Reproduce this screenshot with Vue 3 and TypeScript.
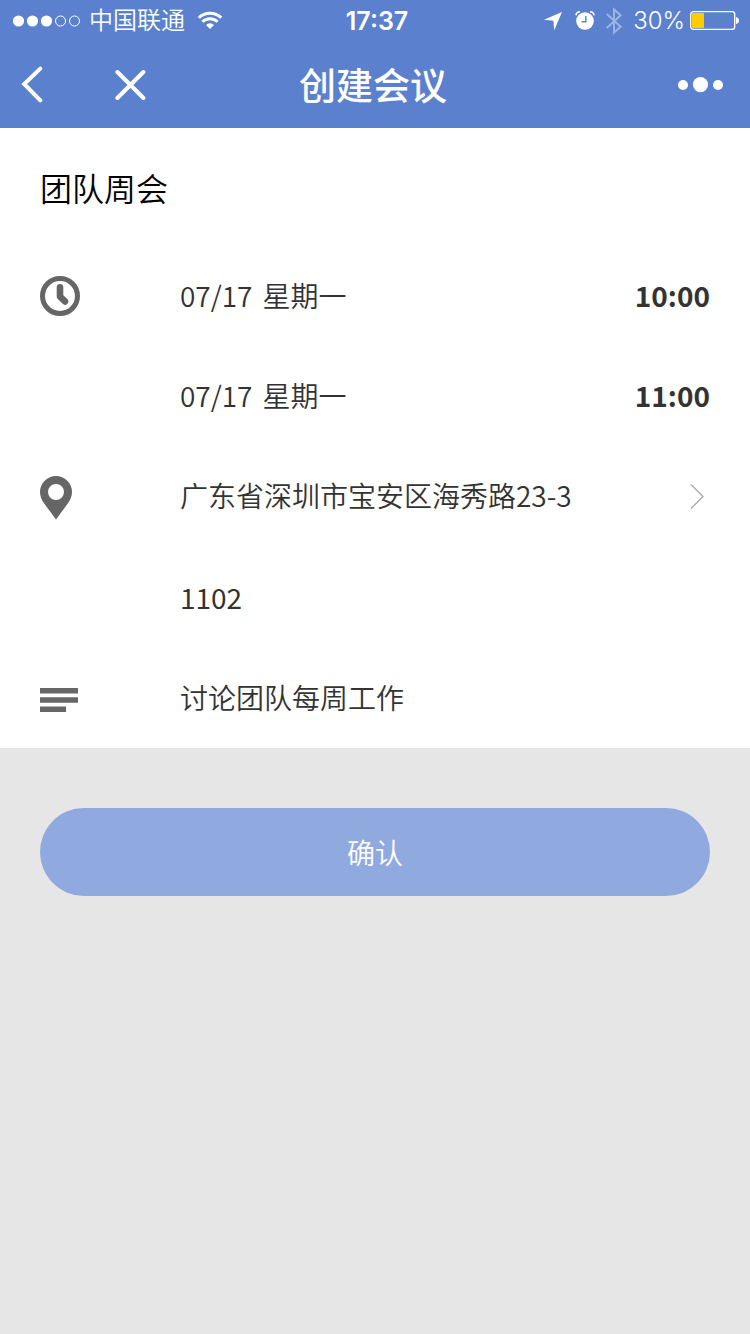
<script setup lang="ts">
import { ref } from 'vue'

interface Slot {
  label: string
  date: string
  weekday: string
  time: string
}

const title = ref('团队周会')
const room = ref('1102')
const note = ref('讨论团队每周工作')
const address = ref('广东省深圳市宝安区海秀路23-3')
const slots = ref<Slot[]>([
  { label: '开始', date: '07/17', weekday: '星期一', time: '10:00' },
  { label: '结束', date: '07/17', weekday: '星期一', time: '11:00' },
])
const signal = 3
const battery = 30
</script>

<template>
  <div class="page">
    <header class="top">
      <div class="status">
        <div class="side">
          <svg class="signal" width="70" height="12" viewBox="0 0 70 12" aria-hidden="true">
            <circle
              v-for="n in 5"
              :key="n"
              :cx="n * 14 - 7.5"
              cy="6"
              :r="n <= signal ? 5.6 : 5"
              :fill="n <= signal ? '#fff' : 'none'"
              :stroke="n <= signal ? 'none' : '#fff'"
            />
          </svg>
          <span class="carrier">中国联通</span>
          <svg class="wifi" width="26" height="20" viewBox="0 0 26 20" fill="none" stroke="#fff" stroke-width="3" aria-hidden="true">
            <path d="M1.8 6.8a16 16 0 0 1 22.4 0" />
            <path d="M5.4 10.8a10.8 10.8 0 0 1 15.2 0" />
            <path d="M13 18l-4-4.1a5.6 5.6 0 0 1 8 0z" fill="#fff" stroke="none" />
          </svg>
        </div>
        <span class="clock">17:37</span>
        <div class="side right">
          <svg width="20" height="20" viewBox="0 0 20 20" fill="#fff" aria-hidden="true">
            <path d="M19 1L11.2 19.2L10.4 9.8L1 8.8z" />
          </svg>
          <svg class="alarm" width="20" height="20" viewBox="0 0 20 20" aria-hidden="true">
            <circle cx="10" cy="10" r="8.8" fill="#fff" />
            <path d="M1 4.4Q1.2 1 5 .8M19 4.4Q18.8 1 15 .8" fill="none" stroke="#fff" stroke-width="1.6" />
            <path d="M10.8 5v5.8H6.6" fill="none" stroke="#5b81ce" stroke-width="1.4" />
          </svg>
          <svg class="bluetooth" width="18" height="28" viewBox="0 0 18 28" fill="none" stroke="#9db3e2" stroke-width="2" aria-hidden="true">
            <path d="M1.8 7L15.6 19.8L9 25.6V2.4L15.6 8.2L1.8 21" />
          </svg>
          <span class="percent">{{ battery }}%</span>
          <svg width="50" height="20" viewBox="0 0 50 20" aria-hidden="true">
            <rect x="0.7" y="0.7" width="44" height="17.6" rx="2.6" fill="none" stroke="#fff" stroke-width="1.3" />
            <rect x="2" y="2.1" :width="battery * 0.4" height="14.8" rx="1" fill="#fc0" />
            <path d="M46 6q3 .6 3 3.4t-3 3.6z" fill="#fff" />
          </svg>
        </div>
      </div>
      <nav class="bar">
        <div class="actions">
          <button type="button" aria-label="返回">
            <svg width="24" height="38" viewBox="0 0 24 38" fill="none" stroke="#fff" stroke-width="4" stroke-linecap="round" stroke-linejoin="miter">
              <path d="M20.3 2.6L4.2 18L20.3 34.4" />
            </svg>
          </button>
          <button type="button" aria-label="关闭">
            <svg width="32" height="32" viewBox="0 0 32 32" fill="none" stroke="#fff" stroke-width="4" stroke-linecap="round">
              <path d="M3.4 3L29.4 29M29.4 3L3.4 29" />
            </svg>
          </button>
        </div>
        <h1>创建会议</h1>
        <div class="actions end">
          <button type="button" aria-label="更多">
            <svg width="48" height="16" viewBox="0 0 48 16" fill="#fff">
              <circle cx="5" cy="8" r="5" />
              <circle cx="22.5" cy="7.6" r="7.6" />
              <circle cx="40" cy="8" r="5" />
            </svg>
          </button>
        </div>
      </nav>
    </header>

    <form @submit.prevent>
      <div class="sheet">
        <div class="heading">
          <input v-model="title" type="text" aria-label="会议名称" />
        </div>

        <section class="group">
          <div class="mark">
            <svg width="40" height="40" viewBox="0 0 40 40" fill="none" stroke="#666" aria-hidden="true">
              <circle cx="20" cy="20" r="17.5" stroke-width="5" />
              <path d="M20 11.4V20.6L25 25.4" stroke-width="6.6" stroke-linecap="round" stroke-linejoin="round" />
            </svg>
          </div>
          <div class="fields">
            <div v-for="slot in slots" :key="slot.label" class="row">
              <button type="button" class="date" :aria-label="`${slot.label}日期 ${slot.date} ${slot.weekday}`">
                <span>{{ slot.date }}</span>
                <span>{{ slot.weekday }}</span>
              </button>
              <button type="button" class="time" :aria-label="`${slot.label}时间 ${slot.time}`">{{ slot.time }}</button>
            </div>
          </div>
        </section>

        <section class="group">
          <div class="mark">
            <svg width="32" height="48" viewBox="0 -4 32 48" aria-hidden="true">
              <path d="M16 0A16 16 0 0 0 0 16Q0 22 4.6 28L16 43.6L27.4 28Q32 22 32 16A16 16 0 0 0 16 0zM16 8a8 8 0 1 1 0 16a8 8 0 0 1 0-16z" fill="#666" fill-rule="evenodd" />
            </svg>
          </div>
          <div class="fields places">
            <button type="button" class="row link">
              <span>{{ address }}</span>
              <svg width="20" height="28" viewBox="0 0 20 28" fill="none" stroke="#aaa" stroke-width="1.4" aria-hidden="true">
                <path d="M1 3.4L13 15.4L1 27.4" />
              </svg>
            </button>
            <div class="row">
              <input v-model="room" class="room" type="text" aria-label="房间号" />
            </div>
          </div>
        </section>

        <section class="group">
          <div class="mark">
            <svg width="38" height="28" viewBox="0 -4 38 28" fill="#666" aria-hidden="true">
              <path d="M0 0h38v5.6H0zM0 9.2h38v5.6H0zM0 18.4h26V24H0z" />
            </svg>
          </div>
          <div class="fields">
            <div class="row">
              <input v-model="note" type="text" aria-label="会议备注" />
            </div>
          </div>
        </section>
      </div>

      <div class="footer">
        <button type="submit" class="confirm">确认</button>
      </div>
    </form>
  </div>
</template>

<style>
body {
  margin: 0;
  background: #e6e6e6;
}
</style>

<style scoped>
.page {
  min-height: 100vh;
  background: #e6e6e6;
  color: #333;
  font-family: "Noto Sans CJK SC", sans-serif;
  font-size: 28px;
  line-height: 40px;
}
* {
  box-sizing: border-box;
}
svg {
  display: block;
  flex: none;
}
button,
input {
  margin: 0;
  padding: 0;
  border: 0;
  border-radius: 0;
  background: none;
  color: inherit;
  font: inherit;
  text-align: left;
  outline: none;
}
button {
  cursor: pointer;
}
input {
  width: 100%;
  min-width: 0;
}
.top {
  background: #5b81ce;
  color: #fff;
}
.status {
  display: flex;
  align-items: center;
  height: 42px;
  padding: 0 10px 0 12px;
  font-family: Inter, "Noto Sans CJK SC", sans-serif;
  font-size: 24px;
}
.side {
  display: flex;
  flex: 1;
  align-items: center;
}
.side.right {
  justify-content: flex-end;
}
.carrier {
  margin: 0 12px 0 7px;
  font-weight: 350;
}
.clock {
  padding-left: 2px;
  font-size: 25px;
  font-weight: 600;
}
.alarm {
  margin-left: 12px;
}
.bluetooth {
  margin: 0 10px 0 10px;
}
.percent {
  margin-right: 5px;
  font-weight: 350;
}
.bar {
  display: flex;
  align-items: center;
  height: 86px;
  padding: 0 24px 0 20px;
}
.actions {
  display: flex;
  flex: 1;
  align-items: center;
  gap: 70px;
}
.actions.end {
  justify-content: flex-end;
}
h1 {
  margin: 0;
  padding-bottom: 2px;
  font-size: 37px;
  font-weight: 500;
}
.sheet {
  background: #fff;
}
.heading {
  display: flex;
  align-items: center;
  height: 118px;
  padding: 0 40px;
  color: #000;
  font-size: 32px;
  font-weight: 350;
}
.group {
  display: flex;
  padding: 0 40px;
}
.mark {
  display: flex;
  flex: 0 0 140px;
  align-items: center;
  height: 100px;
}
.fields {
  display: flex;
  flex: 1;
  flex-direction: column;
  min-width: 0;
}
.places {
  gap: 2px;
}
.row {
  display: flex;
  align-items: center;
  justify-content: space-between;
  height: 100px;
  padding-bottom: 2px;
  font-weight: 350;
}
.date {
  display: flex;
  gap: 10px;
}
.time {
  font-weight: 700;
}
.room {
  font-weight: 400;
}
.footer {
  padding: 60px 40px;
}
.confirm {
  display: block;
  width: 100%;
  height: 88px;
  border-radius: 44px;
  background: #90a9df;
  color: #fff;
  font-weight: 350;
  text-align: center;
}
</style>
